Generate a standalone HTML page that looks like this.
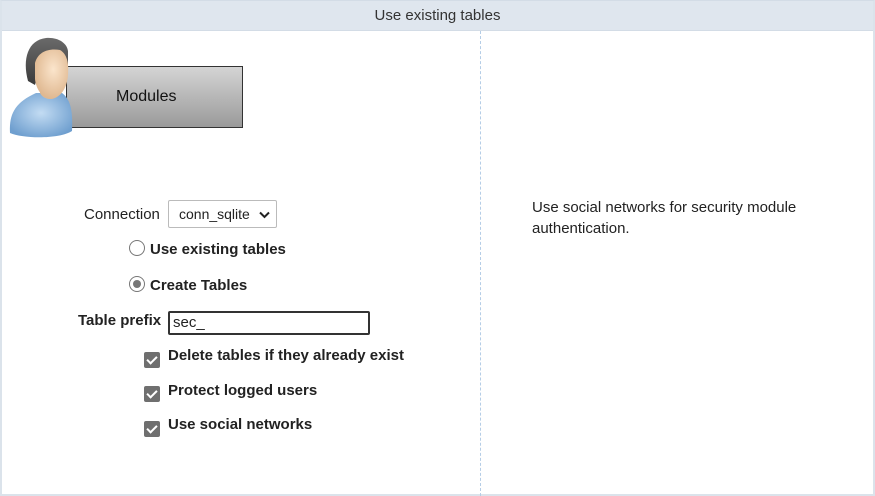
<!DOCTYPE html>
<html><head><meta charset="utf-8"><style>
*{margin:0;padding:0;box-sizing:border-box}
body{width:875px;height:496px;background:#fff;font-family:"Liberation Sans",Arial,sans-serif;color:#222;position:relative;overflow:hidden}
.frame{position:absolute;left:0;top:0;width:875px;height:496px;border:2px solid #dbe3eb;border-top:1px solid #d3dce6}
.hdr{position:absolute;left:0;top:0;width:875px;height:31px;background:#dfe6ee;border-bottom:1px solid #d3dce6;text-align:center;font-size:15px;line-height:32px;color:#333}
.div{position:absolute;left:480px;top:31px;height:465px;border-left:1px dashed #b5cde6}
.btn{position:absolute;left:66px;top:66px;width:177px;height:62px;border:1px solid #333;background:linear-gradient(#d4d4d4,#9a9a9a);font-size:16px;line-height:60px;color:#111;padding-left:49px}
.t{position:absolute;font-size:15px}
.b{font-weight:bold}
.sel{position:absolute;left:168px;top:200px;width:109px;height:28px;border:1px solid #bbb;border-radius:2px;font-size:14px;line-height:26px;padding-left:10px}
.radio{position:absolute;width:16px;height:16px;border:1px solid #777;border-radius:50%;background:#fff}
.inp{position:absolute;left:168px;top:311px;width:202px;height:24px;border:2px solid #333;border-radius:2px;font-size:15px;line-height:20px;padding-left:3px}
.cb{position:absolute;left:144px;width:16px;height:16px;background:#6f6f6f;border-radius:2px}
.cb:after{content:"";position:absolute;left:5px;top:2px;width:4px;height:8px;border:solid #fff;border-width:0 2px 2px 0;transform:rotate(45deg)}
</style></head><body>
<div class="hdr">Use existing tables</div>
<div class="frame"></div>
<div class="div"></div>
<div class="btn">Modules</div>
<svg style="position:absolute;left:0;top:35px" width="80" height="110" viewBox="0 0 80 110">
<defs><radialGradient id="sh" cx="50%" cy="45%" r="60%"><stop offset="0" stop-color="#c3dcf3"/><stop offset="1" stop-color="#6f9fcf"/></radialGradient>
<radialGradient id="fc" cx="55%" cy="40%" r="65%"><stop offset="0" stop-color="#fbe5cc"/><stop offset="1" stop-color="#ddb48b"/></radialGradient>
<linearGradient id="hr" x1="0" y1="0" x2="0" y2="1"><stop offset="0" stop-color="#6a6a6a"/><stop offset="1" stop-color="#3a3a3a"/></linearGradient></defs>
<path d="M10 98 C9 80 14 68 36 58 L62 58 C70 64 73 74 72 96 C60 104 24 104 10 98Z" fill="url(#sh)"/>
<path d="M40 44 L40 58 C44 66 56 66 60 58 L60 44Z" fill="#dfba93"/>
<path d="M28 46 C22 24 28 5 46 3 C58 2 67 8 68 16 L68 30 L40 30 L35 50Z" fill="url(#hr)"/>
<path d="M35 28 C38 17 48 13 60 15 C67 19 69 28 68 40 C67 54 60 63 51 64 C42 63 36 54 35 44Z" fill="url(#fc)"/>
</svg>
<div class="t" style="left:84px;top:206px">Connection</div>
<div class="sel">conn_sqlite<svg style="position:absolute;right:6px;top:10px" width="11" height="8" viewBox="0 0 11 8"><path d="M1 1.5 L5.5 6 L10 1.5" stroke="#222" stroke-width="2" fill="none"/></svg></div>
<div class="radio" style="left:129px;top:240px"></div>
<div class="t b" style="left:150px;top:241px">Use existing tables</div>
<div class="radio" style="left:129px;top:276px"><div style="position:absolute;left:3px;top:3px;width:8px;height:8px;border-radius:50%;background:#777"></div></div>
<div class="t b" style="left:150px;top:277px">Create Tables</div>
<div class="t b" style="left:78px;top:312px">Table prefix</div>
<div class="inp">sec_</div>
<div class="cb" style="top:352px"></div>
<div class="t b" style="left:168px;top:347px">Delete tables if they already exist</div>
<div class="cb" style="top:386px"></div>
<div class="t b" style="left:168px;top:382px">Protect logged users</div>
<div class="cb" style="top:421px"></div>
<div class="t b" style="left:168px;top:416px">Use social networks</div>
<div class="t" style="left:532px;top:197px;width:300px;line-height:21px">Use social networks for security module authentication.</div>
</body></html>
